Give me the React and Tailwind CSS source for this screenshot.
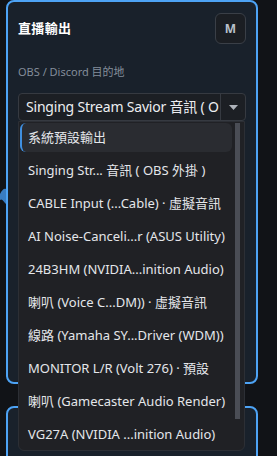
import React from 'react';

const devices = [
  '系統預設輸出',
  'Singing Str... 音訊 ( OBS 外掛 )',
  'CABLE Input (...Cable) · 虛擬音訊',
  'AI Noise-Canceli...r (ASUS Utility)',
  '24B3HM (NVIDIA...inition Audio)',
  '喇叭 (Voice C...DM)) · 虛擬音訊',
  '線路 (Yamaha SY...Driver (WDM))',
  'MONITOR L/R (Volt 276) · 預設',
  '喇叭 (Gamecaster Audio Render)',
  'VG27A (NVIDIA ...inition Audio)',
];

export default function App() {
  return (
    <div
      className="relative w-[277px] h-[456px] overflow-hidden bg-[#111317] text-[#e4e6ea]"
      style={{ fontFamily: '"Noto Sans", "Noto Sans CJK TC", sans-serif' }}
    >
      {/* glimpse of a meter behind the panel */}
      <svg className="absolute left-0 top-[184px]" width="8" height="26" viewBox="0 0 8 26">
        <path d="M0 10 C2 6 4 4 6 5 L6 20 C4 18 2 14 0 16 Z" fill="#3f8fe0" opacity="0.85" />
      </svg>

      {/* Stream output panel */}
      <div className="ml-[6px] w-[252px] h-[384px] border-2 border-[#4da3f5] rounded-lg bg-[#19212b] px-[10px] pt-[11px]">
        <div className="flex items-center justify-between h-[31px]">
          <h2 className="text-[13px] font-bold text-white tracking-wide">直播輸出</h2>
          <button className="w-[31px] h-[31px] rounded-md border border-[#3a3f47] bg-[#1b1e23] text-[12px] font-bold text-[#b9c0ca] flex items-center justify-center">
            M
          </button>
        </div>

        <div className="mt-[20px] text-[11px] leading-[16px] text-[#838d9a]">OBS / Discord 目的地</div>

        <div className="relative mt-[13px]">
          {/* select */}
          <div className="flex h-[28px] rounded border border-[#363a41] bg-[#1c1f24]">
            <div className="flex-1 overflow-hidden whitespace-nowrap pl-[7px] text-[14px] leading-[26px] tracking-[-0.2px] text-[#eceef1]">
              Singing Stream Savior 音訊 ( O
            </div>
            <div className="w-[25px] border-l border-[#363a41] flex items-center justify-center">
              <svg width="9" height="5" viewBox="0 0 9 5">
                <path d="M0 0 L9 0 L4.5 5 Z" fill="#aeb3ba" />
              </svg>
            </div>
          </div>

          {/* open menu */}
          <div className="absolute left-0 top-[28px] w-[227px] h-[330px] rounded-b-md border border-[#2c2f35] bg-[#202125] flex overflow-hidden z-10">
            <div className="flex-1 pl-[1px] pt-[1px] flex flex-col gap-[4px]">
              {devices.map((d, i) => (
                <div
                  key={d}
                  className={
                    i === 0
                      ? 'h-[29px] shrink-0 rounded-md bg-[#2a2c31] border-l-2 border-[#3f8fe0] pl-[6px] flex items-center text-[13px] whitespace-nowrap'
                      : 'h-[29px] shrink-0 pl-[8px] flex items-center text-[13px] whitespace-nowrap text-[#e4e6ea]'
                  }
                >
                  {d}
                </div>
              ))}
            </div>
            <div className="w-[12px] pt-[1px] pl-[3px]">
              <div className="w-[5px] h-[296px] bg-[#4a4d55]" />
            </div>
          </div>
        </div>
      </div>

      {/* next panel */}
      <div className="ml-[6px] mt-[22px] w-[252px] h-[80px] border-2 border-[#4da3f5] rounded-lg bg-[#19212b]" />
    </div>
  );
}
